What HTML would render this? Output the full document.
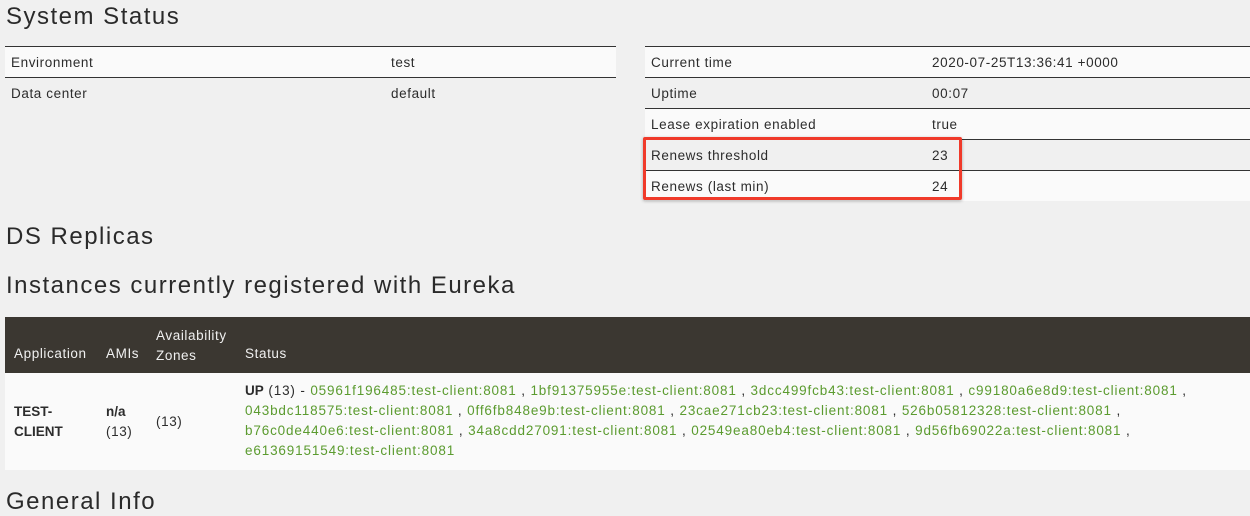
<!DOCTYPE html>
<html><head><style>
body{margin:0;background:#f0f0f0;font-family:"Liberation Sans",sans-serif;color:#2c2c2c;width:1250px;height:505px;overflow:hidden;position:relative;font-size:13.5px;letter-spacing:0.6px}
h1,h2{position:absolute;margin:0;font-weight:normal;font-size:24px;left:6px;color:#2a2a2a;letter-spacing:1.5px}
.t{position:absolute;border-collapse:collapse}
.t td{height:30px;border-top:1px solid #333;padding:0 6px;vertical-align:middle}
.l{background:#fafafa}
.g{color:#5b9b2f}
</style></head><body>
<h1 style="top:3px">System Status</h1>
<table class="t" style="left:5px;top:46px;width:611px">
<tr class="l"><td style="width:368px">Environment</td><td>test</td></tr>
<tr><td style="border-bottom:0">Data center</td><td>default</td></tr>
</table>
<table class="t" style="left:645px;top:46px;width:605px">
<tr class="l"><td style="width:269px">Current time</td><td>2020-07-25T13:36:41 +0000</td></tr>
<tr><td>Uptime</td><td>00:07</td></tr>
<tr class="l"><td>Lease expiration enabled</td><td>true</td></tr>
<tr><td>Renews threshold</td><td>23</td></tr>
<tr class="l"><td>Renews (last min)</td><td>24</td></tr>
</table>
<div style="position:absolute;left:643px;top:137px;width:313px;height:57px;border:3px solid #f03a2a;border-radius:2px;box-shadow:0 1px 3px rgba(0,0,0,.3)"></div>
<h2 style="top:223px">DS Replicas</h2>
<h2 style="top:272px">Instances currently registered with Eureka</h2>
<div style="position:absolute;left:5px;top:317px;width:1245px;height:56px;background:#3b3731;color:#f0f0f0">
<div style="position:absolute;left:9px;top:29px">Application</div>
<div style="position:absolute;left:101px;top:29px">AMIs</div>
<div style="position:absolute;left:151px;top:9px;line-height:20px">Availability<br>Zones</div>
<div style="position:absolute;left:240px;top:29px">Status</div>
</div>
<div style="position:absolute;left:5px;top:373px;width:1245px;height:97px;background:#fafafa;line-height:20px">
<div style="position:absolute;left:9px;top:29px;font-weight:bold;letter-spacing:0">TEST-<br>CLIENT</div>
<div style="position:absolute;left:101px;top:29px"><b style="letter-spacing:0">n/a</b><br>(13)</div>
<div style="position:absolute;left:151px;top:39px">(13)</div>
<div style="position:absolute;left:240px;top:8px;width:1005px;letter-spacing:0.85px;white-space:nowrap"><b style="letter-spacing:0">UP</b> (13) - <span class="g">05961f196485:test-client:8081</span> , <span class="g">1bf91375955e:test-client:8081</span> , <span class="g">3dcc499fcb43:test-client:8081</span> , <span class="g">c99180a6e8d9:test-client:8081</span> ,<br><span class="g">043bdc118575:test-client:8081</span> , <span class="g">0ff6fb848e9b:test-client:8081</span> , <span class="g">23cae271cb23:test-client:8081</span> , <span class="g">526b05812328:test-client:8081</span> ,<br><span class="g">b76c0de440e6:test-client:8081</span> , <span class="g">34a8cdd27091:test-client:8081</span> , <span class="g">02549ea80eb4:test-client:8081</span> , <span class="g">9d56fb69022a:test-client:8081</span> ,<br><span class="g">e61369151549:test-client:8081</span></div>
</div>
<h2 style="top:488px">General Info</h2>
</body></html>
